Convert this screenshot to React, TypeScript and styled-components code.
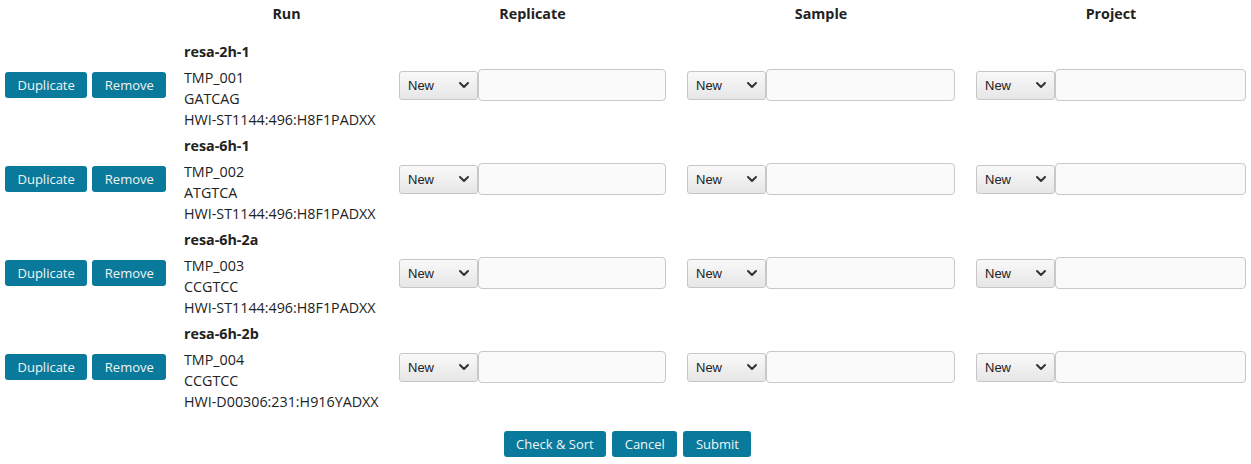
import React from 'react'
import styled, { createGlobalStyle } from 'styled-components'
import { ChevronDown } from 'lucide-react'

const GlobalStyle = createGlobalStyle`
    body{
        margin:0;
        background:#fff;
        font-family:'Open Sans', sans-serif;
        color:#222;
    }
`

type RunRow = {
    name: string
    tmp: string
    barcode: string
    flowcell: string
}

const rows: RunRow[] = [
    { name: 'resa-2h-1', tmp: 'TMP_001', barcode: 'GATCAG', flowcell: 'HWI-ST1144:496:H8F1PADXX' },
    { name: 'resa-6h-1', tmp: 'TMP_002', barcode: 'ATGTCA', flowcell: 'HWI-ST1144:496:H8F1PADXX' },
    { name: 'resa-6h-2a', tmp: 'TMP_003', barcode: 'CCGTCC', flowcell: 'HWI-ST1144:496:H8F1PADXX' },
    { name: 'resa-6h-2b', tmp: 'TMP_004', barcode: 'CCGTCC', flowcell: 'HWI-D00306:231:H916YADXX' },
]

const NewOrExisting = () => (
    <Picker>
        <SelectWrap>
            <Select defaultValue="new">
                <option value="new">New</option>
                <option value="existing">Existing</option>
            </Select>
            <Chevron>
                <ChevronDown size={16} strokeWidth={3} color="#333" />
            </Chevron>
        </SelectWrap>
        <TextInput type="text" />
    </Picker>
)

export default class App extends React.Component<{}, {}> {
    render() {
        return (
            <Page>
                <GlobalStyle />
                <Grid>
                    <HeadCell $pr={0} />
                    <HeadCell $pr={10}>Run</HeadCell>
                    <HeadCell $pr={21}>Replicate</HeadCell>
                    <HeadCell $pr={21}>Sample</HeadCell>
                    <HeadCell $pr={5}>Project</HeadCell>

                    {rows.map(r => (
                        <React.Fragment key={r.name}>
                            <Cell $pr={0}>
                                <Actions>
                                    <Button>Duplicate</Button>
                                    <Button>Remove</Button>
                                </Actions>
                            </Cell>
                            <Cell $pr={10}>
                                <RunInfo>
                                    <RunName>{r.name}</RunName>
                                    <div>{r.tmp}</div>
                                    <div>{r.barcode}</div>
                                    <div>{r.flowcell}</div>
                                </RunInfo>
                            </Cell>
                            <Cell $pr={21}><NewOrExisting /></Cell>
                            <Cell $pr={21}><NewOrExisting /></Cell>
                            <Cell $pr={5}><NewOrExisting /></Cell>
                        </React.Fragment>
                    ))}
                </Grid>
                <Footer>
                    <Button>Check &amp; Sort</Button>
                    <Button>Cancel</Button>
                    <Button>Submit</Button>
                </Footer>
            </Page>
        )
    }
}

const Page = styled.main`
    width:1251px;
    padding-bottom:7px;
`

const Grid = styled.div`
    display:grid;
    grid-template-columns:179px 215px 288px 289px 1fr;
    grid-template-rows:38px repeat(4, 94px);
    padding-left:5px;
`

const HeadCell = styled.div<{ $pr: number }>`
    display:flex;
    align-items:flex-start;
    justify-content:center;
    padding-top:4px;
    padding-right:${p => p.$pr}px;
    font-weight:700;
    font-size:14.3px;
    line-height:20px;
`

const Cell = styled.div<{ $pr: number }>`
    display:flex;
    align-items:center;
    padding-right:${p => p.$pr}px;
    min-width:0;
`

const Actions = styled.div`
    display:flex;
    gap:5px;
`

const Button = styled.button`
    height:26px;
    padding:0 12.5px;
    border:none;
    border-radius:3px;
    background-color:#097a9c;
    color:#f4f4f4;
    font-family:'Open Sans', sans-serif;
    font-size:13px;
    line-height:26px;
    cursor:pointer;
`

const RunInfo = styled.div`
    font-size:14.3px;
    line-height:21px;
    color:#222;
`

const RunName = styled.div`
    font-weight:700;
    margin-bottom:5px;
`

const Picker = styled.div`
    display:flex;
    align-items:center;
    width:100%;
`

const SelectWrap = styled.div`
    position:relative;
    flex:none;
`

const Select = styled.select`
    appearance:none;
    width:79px;
    height:29px;
    padding:0 0 0 8px;
    border:1px solid #c6c6c6;
    border-radius:3px;
    background:linear-gradient(#f9f9f9, #e6e6e6);
    font-family:'Liberation Sans', Arial, sans-serif;
    font-size:13px;
    color:#222;
    outline:none;
`

const Chevron = styled.span`
    position:absolute;
    right:6px;
    top:6px;
    display:flex;
    pointer-events:none;
`

const TextInput = styled.input`
    flex:1;
    min-width:0;
    height:32px;
    box-sizing:border-box;
    border:1px solid #c9c9c9;
    border-radius:4px;
    background:#fafafa;
    outline:none;
`

const Footer = styled.div`
    display:flex;
    justify-content:center;
    gap:6px;
    margin-top:17px;
    padding-left:4px;
`
